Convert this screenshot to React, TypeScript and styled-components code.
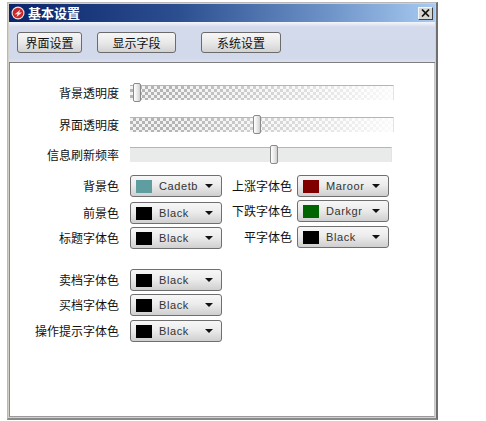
import * as React from 'react';
import styled, { createGlobalStyle } from 'styled-components';

const Global = createGlobalStyle`
  html, body {
    margin: 0;
    padding: 0;
    background: #fff;
  }
  body {
    font-family: 'Noto Sans CJK SC', 'Liberation Sans', sans-serif;
    font-size: 12px;
    color: #111;
  }
`;

const Page = styled.div`
  width: 486px;
  height: 421px;
  padding: 2px 0 0 7px;
  box-sizing: border-box;
  overflow: hidden;
`;

const Window = styled.div`
  width: 431px;
  height: 418px;
  box-sizing: border-box;
  display: flex;
  flex-direction: column;
  background: #d4d0c8;
  border: 1px solid #b8b8b8;
  border-right: 2px solid #6f6f6f;
  border-bottom: 2px solid #8a8a8a;
  padding: 1px;
`;

const TitleBar = styled.div`
  height: 18px;
  flex-shrink: 0;
  display: flex;
  align-items: center;
  padding: 0 2px;
  background: linear-gradient(to right, #0a246a 0%, #2c4f90 40%, #6e93c8 75%, #a6caf0 100%);
`;

const TitleText = styled.span`
  margin-left: 3px;
  color: #fff;
  font-size: 13px;
  font-weight: 700;
  line-height: 18px;
`;

const CloseButton = styled.button`
  margin-left: auto;
  width: 15px;
  height: 13px;
  padding: 0;
  display: flex;
  align-items: center;
  justify-content: center;
  background: #d8d6d0;
  border: 1px solid;
  border-color: #f4f4f4 #404040 #404040 #f4f4f4;
`;

const Toolbar = styled.div`
  height: 41px;
  flex-shrink: 0;
  box-sizing: border-box;
  display: flex;
  align-items: flex-start;
  padding: 10px 0 0 8px;
  background: linear-gradient(to bottom, #f4f6fb 0px, #d3daec 5px, #d2d9eb 36px, #dfe3ef 41px);
  border-bottom: 1px solid #7d7d7d;
`;

const TabButton = styled.button<{ $width: number; $gap: number }>`
  width: ${(p) => p.$width}px;
  height: 21px;
  margin-right: ${(p) => p.$gap}px;
  padding: 0;
  border: 1px solid #6b6b6b;
  border-radius: 3px;
  background: linear-gradient(to bottom, #f6f6f6, #e9e9e9 50%, #d2d2d2);
  font-family: inherit;
  font-size: 12px;
  color: #111;
`;

const Content = styled.div`
  flex: 1;
  min-height: 0;
  display: flex;
  flex-direction: column;
  padding-top: 20px;
  background: #fff;
  border-left: 1px solid #8c8c8c;
  border-right: 1px solid #c8c8c8;
  border-bottom: 1px solid #9a9a9a;
`;

const SliderRow = styled.div<{ $top: number; $width: number }>`
  display: grid;
  grid-template-columns: 109px ${(p) => p.$width}px;
  column-gap: 11px;
  align-items: center;
  height: 19px;
  margin-top: ${(p) => p.$top}px;
`;

const Label = styled.span<{ $width?: number }>`
  ${(p) => (p.$width ? `width: ${p.$width}px; flex-shrink: 0;` : '')}
  text-align: right;
  font-size: 12px;
  line-height: 16px;
  white-space: nowrap;
`;

const Track = styled.div<{ $plain?: boolean }>`
  position: relative;
  height: 15px;
  box-sizing: border-box;
  border-top: 1px solid #b5b5b5;
  border-right: 1px solid #e4e4e4;
  background: ${(p) => (p.$plain ? '#e9eaea' : '#fff')};
`;

const Checker = styled.div`
  position: absolute;
  inset: 0;
  background: repeating-conic-gradient(#b4b4b4 0 25%, #f2f2f2 0 50%) 0 0 / 6px 6px;
  -webkit-mask-image: linear-gradient(to right, #000 0%, #000 15%, rgba(0, 0, 0, 0.06) 100%);
  mask-image: linear-gradient(to right, #000 0%, #000 15%, rgba(0, 0, 0, 0.06) 100%);
`;

const Thumb = styled.div<{ $at: number }>`
  position: absolute;
  left: ${(p) => p.$at}px;
  top: -3px;
  width: 8px;
  height: 19px;
  box-sizing: border-box;
  border: 1px solid #8a8a8a;
  border-radius: 2px;
  background: linear-gradient(to right, #fff, #e6e6e6 60%, #cfcfcf);
`;

const ColorArea = styled.div`
  display: flex;
  margin-top: 11px;
`;

const ColorColumn = styled.div<{ $width: number }>`
  width: ${(p) => p.$width}px;
  flex-shrink: 0;
`;

const ColorRow = styled.div<{ $top?: number }>`
  display: flex;
  align-items: center;
  height: 22px;
  margin-top: ${(p) => p.$top ?? 0}px;
`;

const Dropdown = styled.div<{ $gap: number }>`
  width: 92px;
  height: 22px;
  flex-shrink: 0;
  box-sizing: border-box;
  display: flex;
  align-items: center;
  padding: 0 8px 0 5px;
  margin-left: ${(p) => p.$gap}px;
  border: 1px solid #6f6f6f;
  border-radius: 3px;
  background: linear-gradient(to bottom, #f7f7f7, #ececec 45%, #cfcfcf);
`;

const Swatch = styled.span<{ $color: string }>`
  width: 16px;
  height: 13px;
  flex-shrink: 0;
  background: ${(p) => p.$color};
`;

const ColorName = styled.span`
  margin-left: 7px;
  font-family: 'Liberation Sans', sans-serif;
  font-size: 11px;
  letter-spacing: 0.6px;
  color: #333;
  white-space: nowrap;
`;

const Caret = styled.span`
  margin-left: auto;
  width: 0;
  height: 0;
  border-left: 4px solid transparent;
  border-right: 4px solid transparent;
  border-top: 4px solid #111;
`;

const LowerGroup = styled.div`
  margin-top: 20px;
`;

const AppIcon = () => (
  <svg width="14" height="14" viewBox="0 0 14 14">
    <circle cx="7" cy="7" r="6.5" fill="#e8e4e0" />
    <circle cx="7" cy="7" r="5.3" fill="#c8262a" />
    <path d="M3.5 8.5 L9.5 3.5 L8 6.5 L11 6.5 L5.5 11 L6.5 8 Z" fill="#f6e6e0" />
  </svg>
);

const CloseIcon = () => (
  <svg width="9" height="8" viewBox="0 0 9 8">
    <path d="M1 0.5 L8 7.5 M8 0.5 L1 7.5" stroke="#111" strokeWidth="1.7" />
  </svg>
);

const ColorPicker = ({ label, labelWidth, gap, name, color, top }: {
  label: string;
  labelWidth: number;
  gap: number;
  name: string;
  color: string;
  top?: number;
}) => (
  <ColorRow $top={top}>
    <Label $width={labelWidth}>{label}</Label>
    <Dropdown $gap={gap}>
      <Swatch $color={color} />
      <ColorName>{name}</ColorName>
      <Caret />
    </Dropdown>
  </ColorRow>
);

const App = () => (
  <Page>
    <Global />
    <Window>
      <TitleBar>
        <AppIcon />
        <TitleText>基本设置</TitleText>
        <CloseButton type="button">
          <CloseIcon />
        </CloseButton>
      </TitleBar>
      <Toolbar>
        <TabButton type="button" $width={65} $gap={15}>界面设置</TabButton>
        <TabButton type="button" $width={79} $gap={25}>显示字段</TabButton>
        <TabButton type="button" $width={80} $gap={0}>系统设置</TabButton>
      </Toolbar>
      <Content>
        <SliderRow $top={0} $width={264}>
          <Label>背景透明度</Label>
          <Track>
            <Checker />
            <Thumb $at={3} />
          </Track>
        </SliderRow>
        <SliderRow $top={13} $width={264}>
          <Label>界面透明度</Label>
          <Track>
            <Checker />
            <Thumb $at={123} />
          </Track>
        </SliderRow>
        <SliderRow $top={11} $width={262}>
          <Label>信息刷新频率</Label>
          <Track $plain>
            <Thumb $at={140} />
          </Track>
        </SliderRow>
        <ColorArea>
          <ColorColumn $width={212}>
            <ColorPicker label="背景色" labelWidth={109} gap={11} name="Cadetb" color="#5f9ea0" />
            <ColorPicker label="前景色" labelWidth={109} gap={11} name="Black" color="#000" top={5} />
            <ColorPicker label="标题字体色" labelWidth={109} gap={11} name="Black" color="#000" top={3} />
            <LowerGroup>
              <ColorPicker label="卖档字体色" labelWidth={109} gap={11} name="Black" color="#000" />
              <ColorPicker label="买档字体色" labelWidth={109} gap={11} name="Black" color="#000" top={3} />
              <ColorPicker label="操作提示字体色" labelWidth={109} gap={11} name="Black" color="#000" top={4} />
            </LowerGroup>
          </ColorColumn>
          <ColorColumn $width={167}>
            <ColorPicker label="上涨字体色" labelWidth={70} gap={5} name="Maroor" color="#800000" />
            <ColorPicker label="下跌字体色" labelWidth={70} gap={5} name="Darkgr" color="#006400" top={3} />
            <ColorPicker label="平字体色" labelWidth={70} gap={5} name="Black" color="#000" top={4} />
          </ColorColumn>
        </ColorArea>
      </Content>
    </Window>
  </Page>
);

export default App;
